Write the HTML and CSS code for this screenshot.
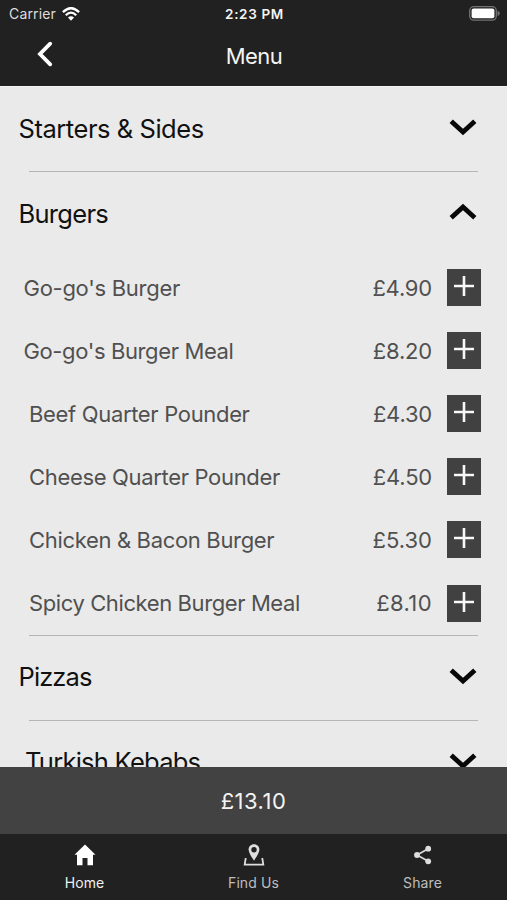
FILE: index.html
```html
<!DOCTYPE html>
<html lang="en">
<head>
<meta charset="utf-8">
<title>Menu</title>
<link rel="stylesheet" href="styles.css">
</head>
<body>
<div class="app">
  <div class="status">
    <div class="carrier"><span>Carrier</span>
      <svg class="wifi" width="18" height="14" viewBox="0 0 18 14"><g fill="none" stroke="#fff" stroke-width="2.3"><path d="M.9 5.1Q9-2.7 17.1 5.1"/><path d="M3.8 8.2Q9 3 14.2 8.2"/></g><path fill="#fff" d="M6 10.6Q9 7.8 12 10.6L9 13.8Z"/></svg>
    </div>
    <span class="clock">2:23 PM</span>
    <svg class="battery" width="31" height="15" viewBox="0 0 31 15"><rect x=".7" y=".7" width="26.6" height="13.4" rx="4" fill="none" stroke="#737373" stroke-width="1.3"/><rect x="2.6" y="2.6" width="22.8" height="9.6" rx="2" fill="#fff"/><path fill="#737373" d="M28.5 4.8Q30.8 5.6 30.8 7.4T28.5 10Z"/></svg>
  </div>
  <header class="nav">
    <svg class="back" width="16" height="26" viewBox="0 0 16 26"><path d="M13.2 2.7 3 13 13.2 23.3" fill="none" stroke="#fff" stroke-width="3.8" stroke-linecap="round"/></svg>
    <h1 class="title">Menu</h1>
  </header>
  <main class="list">
    <section class="group"><h2 class="head"><span class="t-starters">Starters &amp; Sides</span><svg class="chev" viewBox="0 0 28 18"><path d="M2.2 3.2 14 14 25.8 3.2"/></svg></h2></section>
    <section class="group"><h2 class="head"><span class="t-burgers">Burgers</span><svg class="chev" viewBox="0 0 28 18"><path d="M2.2 14.8 14 4 25.8 14.8"/></svg></h2>
      <ul class="items">
        <li class="item"><span class="name wide n1">Go-go's Burger</span><span class="price">£4.90</span><button class="add" aria-label="Add"><svg viewBox="0 0 20 20"><path d="M10 0v20M0 10h20"/></svg></button></li>
        <li class="item"><span class="name wide n2">Go-go's Burger Meal</span><span class="price">£8.20</span><button class="add" aria-label="Add"><svg viewBox="0 0 20 20"><path d="M10 0v20M0 10h20"/></svg></button></li>
        <li class="item"><span class="name">Beef Quarter Pounder</span><span class="price">£4.30</span><button class="add" aria-label="Add"><svg viewBox="0 0 20 20"><path d="M10 0v20M0 10h20"/></svg></button></li>
        <li class="item"><span class="name">Cheese Quarter Pounder</span><span class="price">£4.50</span><button class="add" aria-label="Add"><svg viewBox="0 0 20 20"><path d="M10 0v20M0 10h20"/></svg></button></li>
        <li class="item"><span class="name">Chicken &amp; Bacon Burger</span><span class="price p-narrow">£5.30</span><button class="add" aria-label="Add"><svg viewBox="0 0 20 20"><path d="M10 0v20M0 10h20"/></svg></button></li>
        <li class="item"><span class="name n6">Spicy Chicken Burger Meal</span><span class="price p-ten">£8.10</span><button class="add" aria-label="Add"><svg viewBox="0 0 20 20"><path d="M10 0v20M0 10h20"/></svg></button></li>
      </ul></section>
    <section class="group"><h2 class="head"><span class="t-pizzas">Pizzas</span><svg class="chev" viewBox="0 0 28 18"><path d="M2.2 3.2 14 14 25.8 3.2"/></svg></h2></section>
    <section class="group"><h2 class="head inset"><span class="t-kebabs">Turkish Kebabs</span><svg class="chev" viewBox="0 0 28 18"><path d="M2.2 3.2 14 14 25.8 3.2"/></svg></h2></section>
  </main>
  <div class="total"><span>£13.10</span></div>
  <nav class="tabs">
    <a class="tab active"><svg width="22" height="22" viewBox="0 0 22 22"><path fill="#fff" d="M11 .5 21.5 10.8H19V21.3H13.5V14H8.5V21.3H3V10.8H.5Z"/></svg><span>Home</span></a>
    <a class="tab"><svg width="22" height="22" viewBox="0 0 22 22"><path fill="#dedede" fill-rule="evenodd" d="M11 .2C7.8.2 5.6 2.6 5.6 5.6 5.6 9.4 11 16.6 11 16.6S16.4 9.4 16.4 5.6C16.4 2.6 14.2.2 11 .2ZM11 3a2.7 2.7 0 1 1 0 5.4A2.7 2.7 0 0 1 11 3Z"/><path d="M3.5 14.9H2.6L1.7 20.6H20.3L19.4 14.9H18.5" fill="none" stroke="#dedede" stroke-width="1.8"/></svg><span>Find Us</span></a>
    <a class="tab"><svg width="22" height="22" viewBox="0 0 22 22"><path d="M16.2 4.7 5 11 16.2 17.3" fill="none" stroke="#dedede" stroke-width="1.6"/><g fill="#dedede"><circle cx="16.2" cy="4.7" r="2.9"/><circle cx="5" cy="11" r="2.9"/><circle cx="16.2" cy="17.3" r="2.9"/></g></svg><span>Share</span></a>
  </nav>
</div>
</body>
</html>
```
FILE: styles.css
```css
* { box-sizing: border-box; }
body { margin: 0; font-family: Inter, "Liberation Sans", sans-serif; }
.app { width: 507px; height: 900px; display: flex; flex-direction: column; overflow: hidden; background: #eaeaea; }
.status { height: 27px; flex: none; background: #212121; display: grid; grid-template-columns: 1fr auto 1fr; align-items: center; padding: 0 7px 0 9px; color: #f4f4f4; }
.carrier { display: flex; align-items: center; gap: 6px; font-size: 14px; letter-spacing: .15px; color: #ddd; }
.clock { font-size: 13.5px; font-weight: 600; letter-spacing: .65px; }
.battery { justify-self: end; }
.nav { height: 59px; flex: none; background: #212121; display: grid; grid-template-columns: 1fr auto 1fr; padding: 0 0 4px 37px; align-items: center; }
.title { margin: 2px 36px 0 0; font-size: 22px; font-weight: 400; line-height: 28px; letter-spacing: -.5px; color: #f4f4f4; }
.back { margin-top: -2px; }
.list { height: 681px; flex: none; overflow: hidden; border-top: 1px solid #f4f4f4; }
.group + .group::before { content: ""; display: block; height: 1px; margin: 0 29px; background: #b5b5b5; }
.head { height: 84px; margin: 0; padding: 0 30px 0 18.5px; display: flex; align-items: center; justify-content: space-between; font-size: 25.5px; font-weight: 400; color: #111; }
.inset { padding-left: 25px; }
.head span, .name, .price { white-space: nowrap; }
.head span { padding-bottom: 2px; }
.t-starters { letter-spacing: -.45px; }
.t-burgers { letter-spacing: -.7px; }
.t-pizzas { letter-spacing: -.9px; }
.t-kebabs { letter-spacing: -.75px; }
.chev { width: 28px; height: 18px; margin-top: -4px; }
.chev path { fill: none; stroke: #080808; stroke-width: 4.8; }
.items { list-style: none; margin: 0; padding: 0; }
.item { height: 63.1px; display: flex; align-items: center; padding: 0 26px 0 29px; font-size: 22px; color: #505050; }
.name { letter-spacing: -.33px; }
.wide { margin-left: -5.5px; }
.n1 { letter-spacing: -.28px; }
.n2 { letter-spacing: -.38px; }
.n6 { letter-spacing: -.4px; }
.price { margin-left: auto; letter-spacing: -.2px; }
.p-narrow { letter-spacing: 0; }
.p-ten { letter-spacing: .4px; }
.add { width: 34px; height: 37px; margin-left: 15px; padding: 0 0 3px; border: 0; background: #414141; display: flex; align-items: center; justify-content: center; }
.add svg { width: 20px; height: 20px; }
.add path { fill: none; stroke: #f8f8f8; stroke-width: 2.6; }
.total { height: 67px; flex: none; background: #424242; color: #f4f4f4; font-size: 22px; letter-spacing: .5px; display: flex; align-items: center; justify-content: center; }
.tabs { height: 66px; flex: none; background: #212121; display: grid; grid-template-columns: repeat(3, 1fr); }
.tab { display: flex; flex-direction: column; align-items: center; padding-top: 10px; gap: 8px; font-size: 14px; line-height: 17px; letter-spacing: .1px; color: #bdbdbd; }
.active { color: #f0f0f0; }
```
